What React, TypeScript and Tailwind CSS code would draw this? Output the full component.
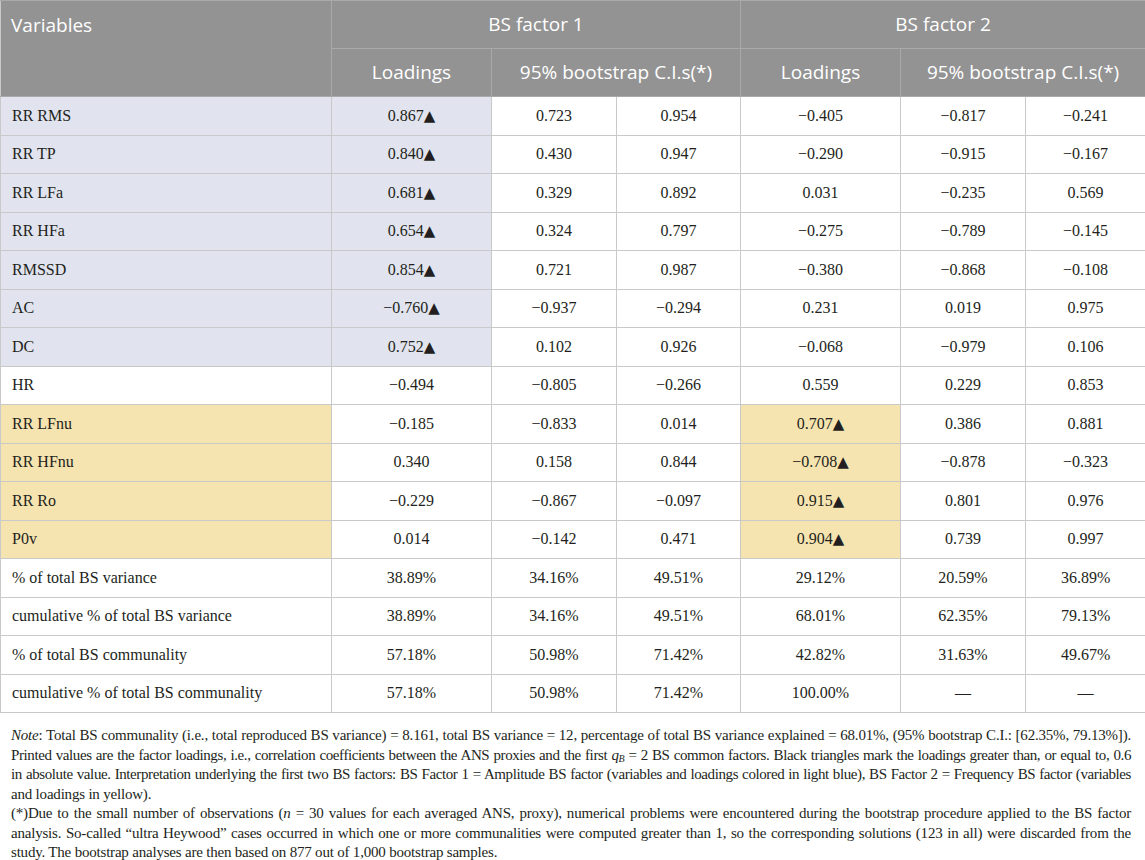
import React from "react";

const M = "\u2212";
type Cell = { v: string; tri?: boolean; hl?: "b" | "y" };
type Row = { name: string; hl?: "b" | "y"; cells: Cell[] };

const blue = "bg-[#e1e4ee]";
const yellow = "bg-[#f6e4b0]";

const r = (name: string, hl: "b" | "y" | undefined, vals: string[], triIdx?: number): Row => ({
  name,
  hl,
  cells: vals.map((v, i) => ({
    v,
    tri: triIdx === i,
    hl: triIdx === i ? hl : undefined,
  })),
});

const rows: Row[] = [
  r("RR RMS", "b", ["0.867", "0.723", "0.954", `${M}0.405`, `${M}0.817`, `${M}0.241`], 0),
  r("RR TP", "b", ["0.840", "0.430", "0.947", `${M}0.290`, `${M}0.915`, `${M}0.167`], 0),
  r("RR LFa", "b", ["0.681", "0.329", "0.892", "0.031", `${M}0.235`, "0.569"], 0),
  r("RR HFa", "b", ["0.654", "0.324", "0.797", `${M}0.275`, `${M}0.789`, `${M}0.145`], 0),
  r("RMSSD", "b", ["0.854", "0.721", "0.987", `${M}0.380`, `${M}0.868`, `${M}0.108`], 0),
  r("AC", "b", [`${M}0.760`, `${M}0.937`, `${M}0.294`, "0.231", "0.019", "0.975"], 0),
  r("DC", "b", ["0.752", "0.102", "0.926", `${M}0.068`, `${M}0.979`, "0.106"], 0),
  r("HR", undefined, [`${M}0.494`, `${M}0.805`, `${M}0.266`, "0.559", "0.229", "0.853"]),
  r("RR LFnu", "y", [`${M}0.185`, `${M}0.833`, "0.014", "0.707", "0.386", "0.881"], 3),
  r("RR HFnu", "y", ["0.340", "0.158", "0.844", `${M}0.708`, `${M}0.878`, `${M}0.323`], 3),
  r("RR Ro", "y", [`${M}0.229`, `${M}0.867`, `${M}0.097`, "0.915", "0.801", "0.976"], 3),
  r("P0v", "y", ["0.014", `${M}0.142`, "0.471", "0.904", "0.739", "0.997"], 3),
  r("% of total BS variance", undefined, ["38.89%", "34.16%", "49.51%", "29.12%", "20.59%", "36.89%"]),
  r("cumulative % of total BS variance", undefined, ["38.89%", "34.16%", "49.51%", "68.01%", "62.35%", "79.13%"]),
  r("% of total BS communality", undefined, ["57.18%", "50.98%", "71.42%", "42.82%", "31.63%", "49.67%"]),
  r("cumulative % of total BS communality", undefined, ["57.18%", "50.98%", "71.42%", "100.00%", "\u2014", "\u2014"]),
];

const hdr = "bg-[#939393] text-white text-[19px] font-normal border border-[#a9a9a9]";
const td = "border border-[#c9c9c9] text-center align-middle p-0";

const Line = ({ children, last, tight }: { children: React.ReactNode; last?: boolean; tight?: boolean }) => (
  <div
    className={`whitespace-nowrap ${
      last ? "" : "text-justify [text-align-last:justify]"
    } ${tight ? "tracking-[-0.4px]" : "tracking-[-0.2px]"}`}
  >
    {children}
  </div>
);

export default function App() {
  return (
    <div className="w-[1145px] h-[860px] bg-white overflow-hidden text-[#231f20]">
      <table
        className="table-fixed border-collapse w-[1145px] [font-family:'Liberation_Serif','Times_New_Roman',serif] text-[16px]"
      >
        <colgroup>
          <col className="w-[331px]" />
          <col className="w-[160px]" />
          <col className="w-[125px]" />
          <col className="w-[124px]" />
          <col className="w-[160px]" />
          <col className="w-[125px]" />
          <col className="w-[120px]" />
        </colgroup>
        <thead className="[font-family:'Open_Sans',sans-serif]">
          <tr className="h-[48px]">
            <th rowSpan={2} className={`${hdr} text-left align-top pl-[10px] pt-[10px] border-l-[#c9c9c9]`}>
              Variables
            </th>
            <th colSpan={3} className={`${hdr} text-center`}>BS factor 1</th>
            <th colSpan={3} className={`${hdr} text-center border-r-[#c9c9c9]`}>BS factor 2</th>
          </tr>
          <tr className="h-[48px]">
            <th className={`${hdr} text-center`}>Loadings</th>
            <th colSpan={2} className={`${hdr} text-center`}>95% bootstrap C.I.s(*)</th>
            <th className={`${hdr} text-center`}>Loadings</th>
            <th colSpan={2} className={`${hdr} text-center border-r-[#c9c9c9]`}>95% bootstrap C.I.s(*)</th>
          </tr>
        </thead>
        <tbody>
          {rows.map((row) => (
            <tr key={row.name} className="h-[38.5px]">
              <td className={`${td} text-left pl-[11px] ${row.hl === "b" ? blue : row.hl === "y" ? yellow : ""}`}>
                {row.name}
              </td>
              {row.cells.map((c, i) => (
                <td key={i} className={`${td} ${c.hl === "b" ? blue : c.hl === "y" ? yellow : ""}`}>
                  {c.v}
                  {c.tri && <span className="[font-family:'DejaVu_Sans',sans-serif] text-[15px]">▲</span>}
                </td>
              ))}
            </tr>
          ))}
        </tbody>
      </table>
      <div className="pl-[11px] pr-[14px] pt-[13px] [font-family:'Liberation_Serif','Times_New_Roman',serif] text-[15px] leading-[19.5px]">
        <Line>
          <i>Note</i>: Total BS communality (i.e., total reproduced BS variance) = 8.161, total BS variance = 12, percentage of total BS variance explained = 68.01%, (95% bootstrap C.I.: [62.35%, 79.13%]).
        </Line>
        <Line tight>
          Printed values are the factor loadings, i.e., correlation coefficients between the ANS proxies and the first{" "}
          <i>q</i>
          <sub className="text-[10px]">
            <i>B</i>
          </sub>{" "}
          = 2 BS common factors. Black triangles mark the loadings greater than, or equal to, 0.6
        </Line>
        <Line tight>
          in absolute value. Interpretation underlying the first two BS factors: BS Factor 1 = Amplitude BS factor (variables and loadings colored in light blue), BS Factor 2 = Frequency BS factor (variables
        </Line>
        <Line last>and loadings in yellow).</Line>
        <Line>
          (*)Due to the small number of observations (<i>n</i> = 30 values for each averaged ANS, proxy), numerical problems were encountered during the bootstrap procedure applied to the BS factor
        </Line>
        <Line>
          analysis. So-called “ultra Heywood” cases occurred in which one or more communalities were computed greater than 1, so the corresponding solutions (123 in all) were discarded from the
        </Line>
        <Line last>study. The bootstrap analyses are then based on 877 out of 1,000 bootstrap samples.</Line>
      </div>
    </div>
  );
}
